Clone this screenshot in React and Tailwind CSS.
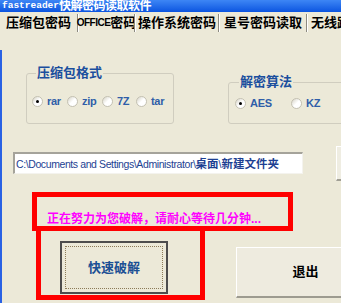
import React from 'react';

const cjk = "font-['Liberation_Sans','Noto_Sans_CJK_SC',sans-serif]";
const narrow = "font-['Liberation_Sans_Narrow','Liberation_Sans','Noto_Sans_CJK_SC',sans-serif]";

const tabs = [
    { label: '压缩包密码', w: 'w-[77px]' },
    { label: 'OFFICE密码', w: 'w-[55px]', office: true },
    { label: '操作系统密码', w: 'w-[82px]' },
    { label: '星号密码读取', w: 'w-[86px]' },
    { label: '无线路由密码', w: 'w-[90px]', last: true },
];

const Radio = ({ checked }) => (
    <span className="w-[11px] h-[11px] rounded-full border border-[#c4c1b3] bg-linear-to-br from-[#d6d3c6] via-white to-white flex items-center justify-center shrink-0">
        {checked && <span className="w-[3px] h-[3px] rounded-full bg-black" />}
    </span>
);

const Option = ({ label, checked, w }) => (
    <div className={`flex items-center gap-[4px] ${w}`}>
        <Radio checked={checked} />
        <span className={`${narrow} text-[11px] font-bold leading-[12px] text-[#2f5ea8] tracking-[-0.3px]`}>{label}</span>
    </div>
);

const Separator = () => (
    <div className="flex h-[18px] shrink-0">
        <div className="w-px bg-[#8c8a80]" />
        <div className="w-px bg-white" />
    </div>
);

export default function App() {
    return (
        <div className={`w-[341px] h-[303px] overflow-hidden bg-[#ece9d8] flex flex-col ${cjk}`}>
            {/* Title bar */}
            <div className="h-[12px] shrink-0 bg-linear-to-b from-[#3d86f5] to-[#0a54e0] flex items-center pl-[2px] overflow-hidden whitespace-nowrap text-white font-bold">
                <span className="font-['Liberation_Mono',monospace] text-[9.5px] leading-[12px]">fastreader</span>
                <span className="text-[12px] leading-[12px] tracking-[-0.5px]">快解密码读取软件</span>
            </div>

            {/* Tabs */}
            <div className="h-[20px] shrink-0 flex items-end whitespace-nowrap overflow-hidden">
                {tabs.map((t) => (
                    <React.Fragment key={t.label}>
                        <div className={`${t.w} h-[18px] shrink-0 flex items-center ${t.last ? 'justify-start pl-[3px]' : 'justify-center'} text-[13px] font-bold leading-[14px] text-black`}>
                            {t.office ? (
                                <>
                                    <span className={`${narrow} text-[10px] tracking-[-0.5px]`}>OFFICE</span>
                                    <span>密码</span>
                                </>
                            ) : t.label}
                        </div>
                        {!t.last && <Separator />}
                    </React.Fragment>
                ))}
            </div>

            <div className="h-[18px] shrink-0" />

            {/* Panel */}
            <div className="flex-1 border-l-2 border-[#2a62e4] flex flex-col">
                {/* Option groups */}
                <div className="flex items-start">
                    <fieldset className="ml-[24px] mt-[16px] w-[148px] h-[58px] shrink-0 border border-[#d0cdbf] rounded-[3px] pl-[5px]">
                        <legend className="ml-[4px] px-[1px] text-[13px] font-bold leading-[14px] text-[#1b4f9e]">压缩包格式</legend>
                        <div className="flex mt-[15px]">
                            <Option label="rar" checked w="w-[35px]" />
                            <Option label="zip" w="w-[35px]" />
                            <Option label="7Z" w="w-[34px]" />
                            <Option label="tar" w="w-[35px]" />
                        </div>
                    </fieldset>

                    <fieldset className="ml-[54px] mt-[25px] w-[130px] h-[49px] shrink-0 border border-[#d0cdbf] rounded-[3px] pl-[6px]">
                        <legend className="ml-[4px] px-[1px] text-[13px] font-bold leading-[14px] text-[#1b4f9e]">解密算法</legend>
                        <div className="flex mt-[8px]">
                            <Option label="AES" checked w="w-[56px]" />
                            <Option label="KZ" w="w-[40px]" />
                        </div>
                    </fieldset>
                </div>

                {/* Path */}
                <div className="flex items-start mt-[22px]">
                    <div className="ml-[11px] mt-[6px] w-[290px] h-[22px] shrink-0 bg-white border-t-2 border-l-2 border-[#a5a39a] border-r border-b border-r-[#f4f3ee] border-b-[#f4f3ee] flex items-center pl-[1px] whitespace-nowrap overflow-hidden text-[#1d3f92]">
                        <span className={`${narrow} text-[10.5px] leading-[14px] tracking-[-0.4px] shrink-0`}>C:\Documents and Settings\Administrator\</span>
                        <span className="text-[11.5px] font-bold leading-[14px] shrink-0">桌面</span>
                        <span className={`${narrow} text-[10.5px] leading-[14px] shrink-0`}>\</span>
                        <span className="text-[11.5px] font-bold leading-[14px] shrink-0">新建文件夹</span>
                    </div>
                    <button className="ml-[33px] w-[60px] h-[35px] shrink-0 bg-[#efede2] border-l border-t border-white border-b-2 border-b-[#a19f94]" />
                </div>

                {/* Status */}
                <div className="ml-[30px] mt-[11px] w-[261px] h-[39px] shrink-0 border-[5px] border-[#ff0000] pl-[10px] pt-[9px]">
                    <span className="text-[12px] font-bold leading-[14px] text-[#ff00ff] whitespace-nowrap">正在努力为您破解，请耐心等待几分钟...</span>
                </div>

                {/* Buttons */}
                <div className="flex items-start">
                    <div className="ml-[34px] w-[169px] h-[69px] shrink-0 border-x-[5px] border-b-[5px] border-[#ff0000] pl-[19px] pt-[10px]">
                        <button className="w-[108px] h-[53px] border-2 border-[#4d4d4d] bg-[#ece9d8] p-[3px] flex">
                            <span className="flex-1 border border-dotted border-[#8c7b58] flex items-center justify-center text-[13px] font-bold leading-[14px] text-[#1b4f94]">
                                快速破解
                            </span>
                        </button>
                    </div>
                    <button className="ml-[31px] mt-[16px] w-[138px] h-[51px] shrink-0 bg-[#eeebdf] border-l border-t border-white border-b-2 border-b-[#9d9b90] flex items-center justify-center text-[13px] font-bold leading-[14px] text-black">
                        退出
                    </button>
                </div>
            </div>
        </div>
    );
}
